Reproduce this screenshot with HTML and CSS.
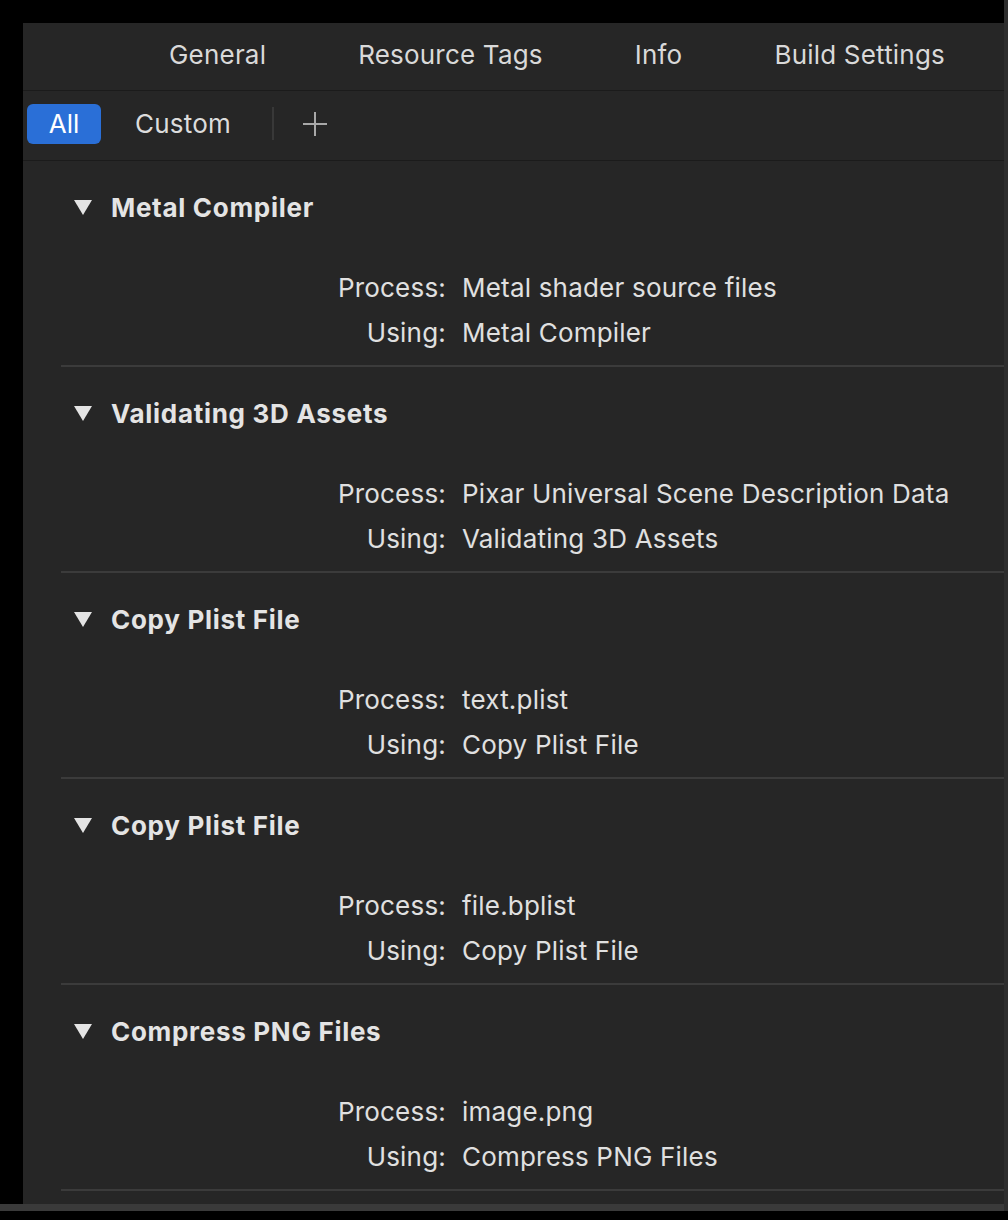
FILE: index.html
```html
<!DOCTYPE html>
<html>
<head>
<meta charset="utf-8">
<link rel="stylesheet" href="styles.css">
</head>
<body>
<div class="screen">
  <div class="top-gap"></div>
  <div class="right-strip"></div>
  <div class="left-gap"></div>
  <div class="panel">
    <div class="tabbar">
      <span class="tab">General</span>
      <span class="tab">Resource Tags</span>
      <span class="tab">Info</span>
      <span class="tab">Build Settings</span>
    </div>
    <div class="filterbar">
      <span class="pill">All</span>
      <span class="filter">Custom</span>
      <span class="vsep"></span>
      <svg class="plus" width="26" height="26" viewBox="0 0 26 26"><path d="M13 1V25M1 13H25" stroke="#a8a8a8" stroke-width="2" fill="none"/></svg>
    </div>
    <div class="rules">
      <section class="rule">
        <div class="rule-head"><svg class="tri" width="18" height="16" viewBox="0 0 18 16"><polygon points="0,1 18,1 9,16" fill="#e4e4e4"/></svg><span>Metal Compiler</span></div>
        <div class="rule-rows">
          <span class="label">Process:</span><span class="value">Metal shader source files</span>
          <span class="label">Using:</span><span class="value">Metal Compiler</span>
        </div>
      </section>
      <section class="rule">
        <div class="rule-head"><svg class="tri" width="18" height="16" viewBox="0 0 18 16"><polygon points="0,1 18,1 9,16" fill="#e4e4e4"/></svg><span>Validating 3D Assets</span></div>
        <div class="rule-rows">
          <span class="label">Process:</span><span class="value">Pixar Universal Scene Description Data</span>
          <span class="label">Using:</span><span class="value">Validating 3D Assets</span>
        </div>
      </section>
      <section class="rule">
        <div class="rule-head"><svg class="tri" width="18" height="16" viewBox="0 0 18 16"><polygon points="0,1 18,1 9,16" fill="#e4e4e4"/></svg><span>Copy Plist File</span></div>
        <div class="rule-rows">
          <span class="label">Process:</span><span class="value">text.plist</span>
          <span class="label">Using:</span><span class="value">Copy Plist File</span>
        </div>
      </section>
      <section class="rule">
        <div class="rule-head"><svg class="tri" width="18" height="16" viewBox="0 0 18 16"><polygon points="0,1 18,1 9,16" fill="#e4e4e4"/></svg><span>Copy Plist File</span></div>
        <div class="rule-rows">
          <span class="label">Process:</span><span class="value">file.bplist</span>
          <span class="label">Using:</span><span class="value">Copy Plist File</span>
        </div>
      </section>
      <section class="rule">
        <div class="rule-head"><svg class="tri" width="18" height="16" viewBox="0 0 18 16"><polygon points="0,1 18,1 9,16" fill="#e4e4e4"/></svg><span>Compress PNG Files</span></div>
        <div class="rule-rows">
          <span class="label">Process:</span><span class="value">image.png</span>
          <span class="label">Using:</span><span class="value">Compress PNG Files</span>
        </div>
      </section>
    </div>
  </div>
  <div class="bottom-band"></div>
</div>
</body>
</html>
```

FILE: styles.css
```css
html, body {
  margin: 0;
  padding: 0;
  background: #000;
}
body {
  width: 1008px;
  height: 1220px;
  overflow: hidden;
  font-family: Inter, "Noto Sans", "Liberation Sans", sans-serif;
  color: #dedede;
}
.screen {
  display: grid;
  grid-template-columns: 23px 981px 4px;
  grid-template-rows: 23px 1181px 7px;
}
.top-gap {
  grid-column: 1 / 3;
  grid-row: 1;
  background: #000;
}
.right-strip {
  grid-column: 3;
  grid-row: 1 / 4;
  background: #2e2e2e;
}
.left-gap {
  grid-column: 1;
  grid-row: 2;
  background: #000;
}
.panel {
  grid-column: 2;
  grid-row: 2;
  background: #262626;
  overflow: hidden;
  display: flex;
  flex-direction: column;
}
.bottom-band {
  grid-column: 1 / 3;
  grid-row: 3;
  background: #3a3a3a;
}
.tabbar {
  height: 62px;
  padding-bottom: 5px;
  border-bottom: 1px solid #1b1b1b;
  display: flex;
  align-items: center;
  gap: 92px;
  padding-left: 146px;
}
.tab {
  font-size: 26px;
  color: #d9d9d9;
  letter-spacing: 0.2px;
}
.filterbar {
  height: 70px;
  box-sizing: border-box;
  padding-left: 4px;
  padding-bottom: 4px;
  border-bottom: 1px solid #1b1b1b;
  display: flex;
  align-items: center;
}
.pill {
  width: 74px;
  height: 40px;
  border-radius: 6px;
  background: #2a6fd7;
  color: #fff;
  font-size: 26px;
  display: flex;
  align-items: center;
  justify-content: center;
}
.filter {
  margin-left: 34px;
  font-size: 26px;
  color: #dcdcdc;
  letter-spacing: 0.2px;
}
.vsep {
  width: 2px;
  height: 33px;
  background: #383838;
  margin-left: 41px;
}
.plus {
  margin-left: 28px;
}
.rules {
  display: flex;
  flex-direction: column;
}
.rule {
  margin-left: 38px;
  padding-top: 31px;
  padding-bottom: 10px;
  border-bottom: 2px solid #3b3b3b;
}
.rule-head {
  height: 30px;
  display: flex;
  align-items: center;
  padding-left: 13px;
  gap: 19px;
  font-size: 26px;
  font-weight: 700;
  color: #e4e4e4;
  letter-spacing: 0.7px;
}
.rule-rows {
  margin-top: 43px;
  display: grid;
  grid-template-columns: 385px 1fr;
  grid-auto-rows: 45px;
  align-items: center;
  font-size: 26px;
  letter-spacing: 0.2px;
}
.label {
  text-align: right;
  color: #e0e0e0;
}
.value {
  padding-left: 16px;
  color: #e0e0e0;
}
```
